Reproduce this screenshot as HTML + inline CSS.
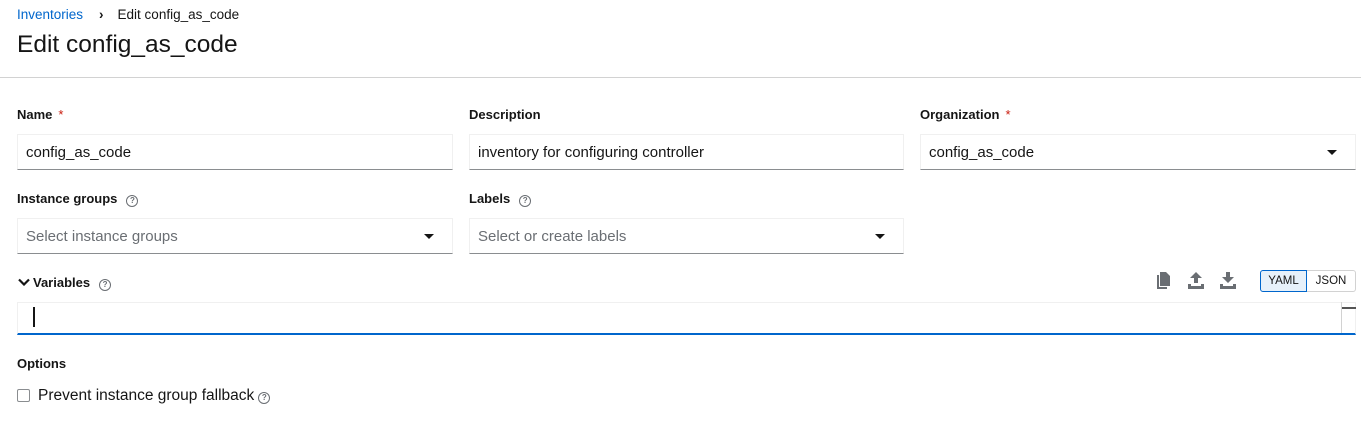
<!DOCTYPE html>
<html><head><style>
body{margin:0;width:1361px;height:443px;background:#fff;font-family:"Liberation Sans",sans-serif;color:#151515;position:relative;overflow:hidden}
.a{position:absolute}
.lbl{font-size:13px;font-weight:bold}
.req{color:#c9190b;margin-left:6px;font-weight:normal}
.in{position:absolute;box-sizing:border-box;height:36px;border:1px solid #f0f0f0;border-bottom:1px solid #8a8d90;font-size:15px;padding:9px 8px 7px;line-height:18px}
.ph{color:#6a6e73}
.caret{position:absolute;right:18px;top:15px;width:0;height:0;border-left:5px solid transparent;border-right:5px solid transparent;border-top:5px solid #151515}
.help{display:inline-block;width:10px;height:10px;border:1px solid #6a6e73;border-radius:50%;font-size:8px;line-height:10px;text-align:center;color:#6a6e73;margin-left:9px;vertical-align:0px;font-weight:bold}
</style></head><body>
<div class="a" style="left:17px;top:7px;font-size:13.5px"><span style="color:#0066cc">Inventories</span><span style="margin:0 14px 0 16px;font-weight:bold">›</span>Edit config_as_code</div>
<div class="a" style="left:17px;top:31px;font-size:24.5px">Edit config_as_code</div>
<div class="a" style="left:0;top:77px;width:1361px;height:1px;background:#d2d2d2"></div>

<div class="a lbl" style="left:17px;top:107px">Name<span class="req">*</span></div>
<div class="a lbl" style="left:469px;top:107px">Description</div>
<div class="a lbl" style="left:920px;top:107px">Organization<span class="req">*</span></div>
<div class="in" style="left:17px;top:134px;width:436px">config_as_code</div>
<div class="in" style="left:469px;top:134px;width:435px">inventory for configuring controller</div>
<div class="in" style="left:920px;top:134px;width:436px">config_as_code<span class="caret"></span></div>

<div class="a lbl" style="left:17px;top:191px">Instance groups<span class="help">?</span></div>
<div class="a lbl" style="left:469px;top:191px">Labels<span class="help">?</span></div>
<div class="in ph" style="left:17px;top:218px;width:436px">Select instance groups<span class="caret"></span></div>
<div class="in ph" style="left:469px;top:218px;width:435px">Select or create labels<span class="caret"></span></div>

<svg class="a" style="left:18px;top:278px" width="12" height="8" viewBox="0 0 12 8"><path d="M1 1.5l5 5 5-5" stroke="#151515" stroke-width="2.2" fill="none"/></svg>
<div class="a lbl" style="left:33px;top:275px">Variables<span class="help">?</span></div>
<svg class="a" style="left:1156px;top:272px" width="16" height="18" viewBox="0 0 16 18"><path d="M4 0h6l4 4v10H4z" fill="#6a6e73"/><path d="M1 3h2v12h8v2H1z" fill="#6a6e73"/></svg>
<svg class="a" style="left:1187px;top:272px" width="18" height="17" viewBox="0 0 18 17"><path d="M9 0l6 6h-4v5H7V6H3z" fill="#6a6e73"/><path d="M1 12h3v2h10v-2h3v5H1z" fill="#6a6e73"/></svg>
<svg class="a" style="left:1219px;top:272px" width="18" height="17" viewBox="0 0 18 17"><path d="M7 0h4v5h4l-6 6-6-6h4z" fill="#6a6e73"/><path d="M1 12h3v2h10v-2h3v5H1z" fill="#6a6e73"/></svg>
<div class="a" style="left:1260px;top:270px;width:47px;height:22px;box-sizing:border-box;border:1px solid #0066cc;border-radius:3px 0 0 3px;background:#e7f1fa;font-size:11.5px;text-align:center;line-height:20px">YAML</div>
<div class="a" style="left:1307px;top:270px;width:49px;height:22px;box-sizing:border-box;border:1px solid #d2d2d2;border-left:none;border-radius:0 3px 3px 0;font-size:11.5px;text-align:center;line-height:20px">JSON</div>
<div class="a" style="left:17px;top:302px;width:1339px;height:33px;box-sizing:border-box;border:1px solid #f0f0f0;border-bottom:2px solid #0066cc"></div>
<div class="a" style="left:1341px;top:302px;width:1px;height:31px;background:#d2d2d2"></div>
<div class="a" style="left:1342px;top:307px;width:14px;height:2px;background:#555"></div>
<div class="a" style="left:33px;top:307px;width:2px;height:20px;background:#151515"></div>

<div class="a lbl" style="left:17px;top:356px">Options</div>
<div class="a" style="left:17px;top:389px;width:13px;height:13px;box-sizing:border-box;border:1px solid #8a8d90;border-radius:2px"></div>
<div class="a" style="left:38px;top:387px;font-size:15.5px">Prevent instance group fallback<span class="help" style="margin-left:4px">?</span></div>
</body></html>
